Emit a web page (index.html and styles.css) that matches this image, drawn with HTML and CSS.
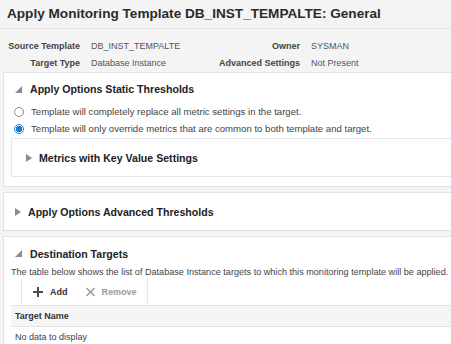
FILE: index.html
```html
<!DOCTYPE html>
<html lang="en">
<head>
    <meta charset="UTF-8">
    <meta name="viewport" content="width=device-width, initial-scale=1.0">
    <title>Apply Monitoring Template</title>
    <link rel="stylesheet" href="styles.css">
</head>
<body>
    <div class="page-head">
        <h1>Apply Monitoring Template DB_INST_TEMPALTE: General</h1>
    </div>

    <div class="info">
        <span class="label">Source Template</span>
        <span class="value">DB_INST_TEMPALTE</span>
        <span class="label">Owner</span>
        <span class="value">SYSMAN</span>
        <span class="label">Target Type</span>
        <span class="value">Database Instance</span>
        <span class="label">Advanced Settings</span>
        <span class="value">Not Present</span>
    </div>

    <section class="panel first">
        <div class="panel-head">
            <span class="tri open"></span>
            <h2>Apply Options Static Thresholds</h2>
        </div>
        <label class="option">
            <span class="radio"></span>
            Template will completely replace all metric settings in the target.
        </label>
        <label class="option">
            <span class="radio checked"></span>
            Template will only override metrics that are common to both template and target.
        </label>
        <div class="subbox">
            <div class="panel-head">
                <span class="tri closed"></span>
                <h2>Metrics with Key Value Settings</h2>
            </div>
        </div>
    </section>

    <section class="panel">
        <div class="panel-head tall">
            <span class="tri closed"></span>
            <h2>Apply Options Advanced Thresholds</h2>
        </div>
    </section>

    <section class="panel last">
        <div class="panel-head">
            <span class="tri open"></span>
            <h2>Destination Targets</h2>
        </div>
        <p class="desc">The table below shows the list of Database Instance targets to which this monitoring template will be applied.</p>
        <div class="toolbar">
            <button class="tool">
                <svg width="10" height="10" viewBox="0 0 10 10"><path d="M4 0h2v4h4v2H6v4H4V6H0V4h4z" fill="#4a4a4a"/></svg>
                Add
            </button>
            <button class="tool disabled">
                <svg width="9" height="10" viewBox="0 0 9 10"><path d="M1 0.5L4.5 4 8 0.5 9 1.6 5.6 5 9 8.4 8 9.5 4.5 6 1 9.5 0 8.4 3.4 5 0 1.6z" fill="#9a9a9a"/></svg>
                Remove
            </button>
        </div>
        <table class="grid">
            <thead>
                <tr><th>Target Name</th></tr>
            </thead>
            <tbody>
                <tr><td>No data to display</td></tr>
            </tbody>
        </table>
    </section>
</body>
</html>
```

FILE: styles.css
```css
body {
    margin: 0;
    background: #f4f4f4;
    font-family: "Liberation Sans", Arial, sans-serif;
    color: #333;
    overflow: hidden;
}
.page-head {
    padding: 5px 7px 0;
    height: 23px;
    border-bottom: 1px solid #e6e6e6;
}
h1 {
    margin: 0;
    font-size: 13.6px;
    font-weight: bold;
    color: #2b2b2b;
    line-height: 17px;
}
.info {
    display: grid;
    grid-template-columns: 80px 108px 90px auto;
    column-gap: 11px;
    row-gap: 5px;
    padding: 11px 0 3px 0;
    font-size: 9px;
    line-height: 12px;
}
.info .label {
    text-align: right;
    font-weight: bold;
    color: #444;
}
.info .value {
    color: #555;
}
.panel {
    background: #fff;
    border: 1px solid #e2e2e2;
    border-right: none;
    margin: 0 0 5px 3px;
    padding: 0 0 0 7px;
}
.panel.first {
    padding-bottom: 9px;
}
.panel-head {
    display: flex;
    align-items: center;
    height: 28px;
    margin-top: 2px;
    padding-left: 4px;
}
.panel-head.tall {
    height: 37px;
    margin-top: 0;
}
.panel-head h2 {
    margin: 0;
    font-size: 10.6px;
    font-weight: bold;
    color: #222;
}
.tri {
    width: 0;
    height: 0;
    margin-right: 8px;
}
.tri.open {
    border-left: 7px solid transparent;
    border-bottom: 7px solid #8a8a8a;
}
.tri.closed {
    border-top: 4px solid transparent;
    border-bottom: 4px solid transparent;
    border-left: 6px solid #8a8a8a;
    margin-right: 7px;
}
.option {
    display: flex;
    align-items: center;
    height: 17px;
    padding-left: 3px;
    font-size: 9.6px;
    color: #444;
}
.radio {
    width: 8px;
    height: 8px;
    border: 1px solid #8c8c8c;
    border-radius: 50%;
    margin-right: 7px;
    background: #fff;
    box-sizing: content-box;
}
.radio.checked {
    border-color: #2a7fd0;
    background: radial-gradient(circle, #1f78d1 0 3px, #fff 3.5px);
}
.subbox {
    margin-top: 1px;
    border: 1px solid #e3e6ea;
    border-right: none;
    padding-left: 10px;
}
.subbox .panel-head {
    height: 37px;
    margin-top: 0;
}
.panel.last .panel-head {
    height: 25px;
    margin-top: 4px;
}
.desc {
    margin: 0;
    font-size: 9.1px;
    color: #444;
    white-space: nowrap;
    line-height: 12px;
}
.toolbar {
    display: flex;
    margin: 1px 0 0 10px;
    width: 114px;
    height: 26px;
    border-left: 1px solid #e6e6e6;
    border-right: 1px solid #e6e6e6;
    padding-left: 11px;
    gap: 18px;
}
.tool {
    display: flex;
    align-items: center;
    gap: 7px;
    border: none;
    background: none;
    padding: 0;
    font-family: inherit;
    font-size: 9px;
    font-weight: bold;
    color: #333;
}
.tool.disabled {
    color: #9a9a9a;
}
.grid {
    width: 100%;
    border-collapse: collapse;
    font-size: 9px;
}
.grid th {
    text-align: left;
    background: #f5f5f5;
    border-top: 1px solid #e2e2e2;
    border-bottom: 1px solid #e2e2e2;
    height: 20px;
    padding: 0 4px;
    font-weight: bold;
    color: #333;
}
.grid td {
    height: 19px;
    padding: 0 4px;
    color: #444;
}
```
